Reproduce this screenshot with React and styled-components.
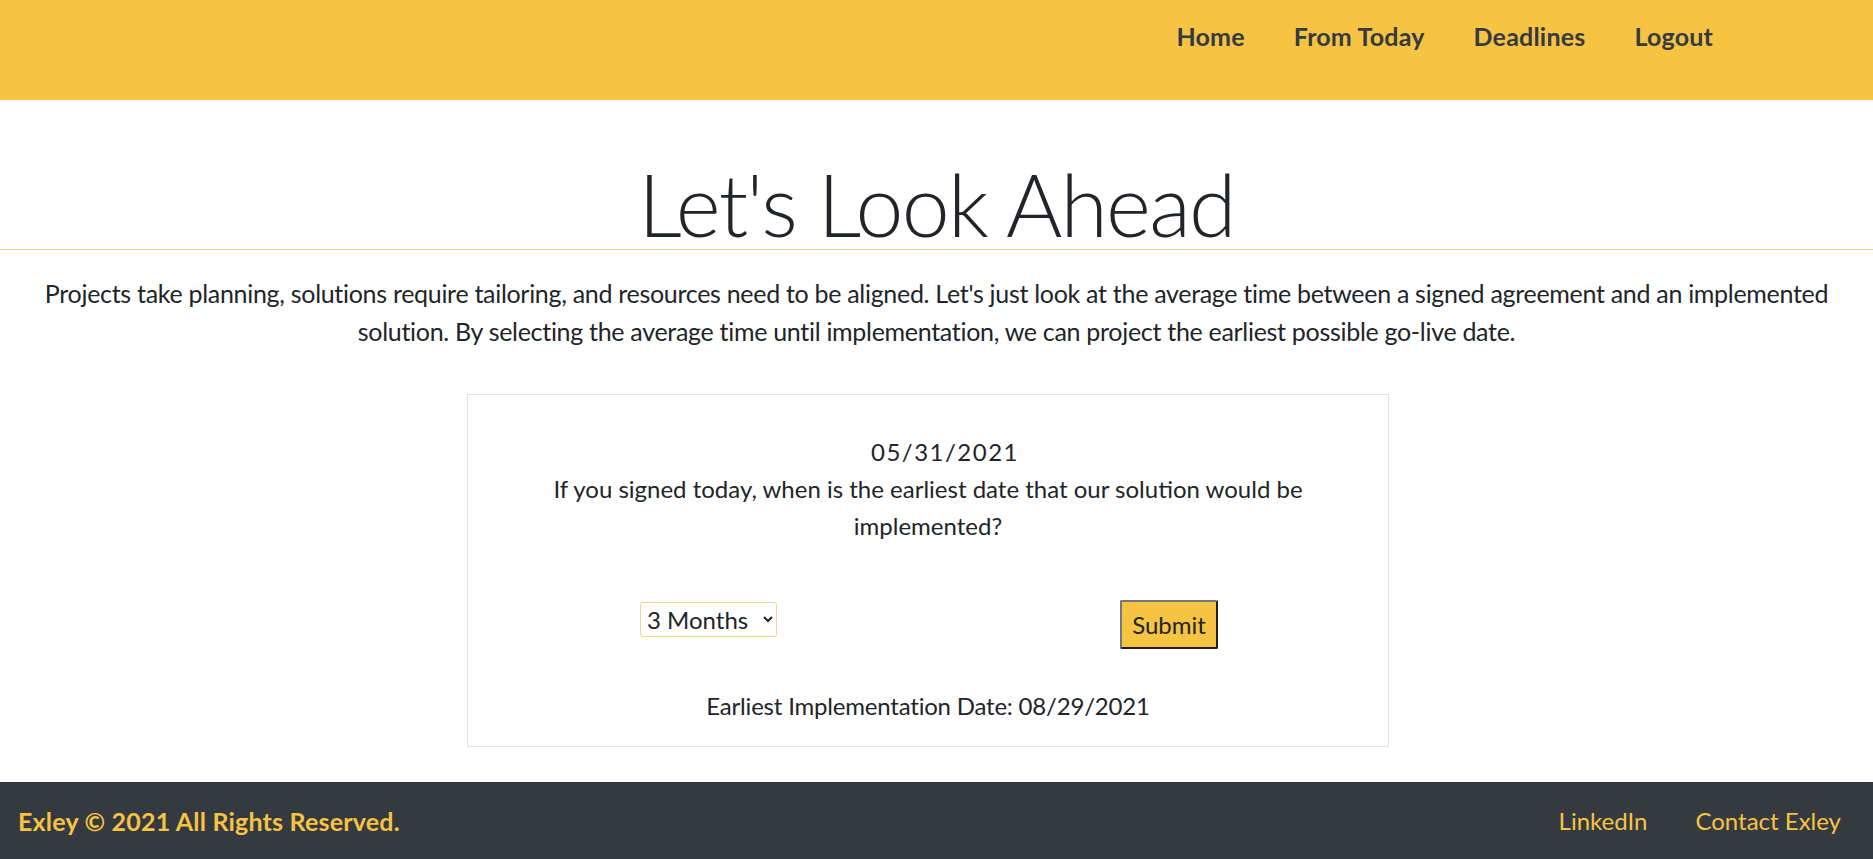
import React, { useState } from "react";
import styled, { createGlobalStyle } from "styled-components";

const GlobalStyle = createGlobalStyle`
  body {
    margin: 0;
    font-family: "Lato", "Open Sans", sans-serif;
    color: #212529;
    background: #fff;
  }
`;

const Page = styled.div`
  min-height: 100vh;
  display: flex;
  flex-direction: column;
`;

const NavBar = styled.nav`
  height: 100px;
  background: #f6c343;
  display: flex;
  justify-content: flex-end;
  align-items: flex-start;
  gap: 49px;
  padding: 22px 160px 0 0;
  box-sizing: border-box;
`;

const NavLink = styled.a`
  font-size: 25px;
  font-weight: 700;
  line-height: 28px;
  letter-spacing: 0.2px;
  color: #343a40;
  text-decoration: none;
  cursor: pointer;
`;

const Title = styled.h1`
  margin: 59px 0 0;
  font-size: 86px;
  font-weight: 300;
  line-height: 90px;
  letter-spacing: -1.7px;
  text-align: center;
  border-bottom: 1px solid #ebd293;
`;

const Lead = styled.p`
  margin: 24px 0 0;
  padding: 0 20px;
  font-size: 25px;
  line-height: 38px;
  letter-spacing: -0.3px;
  text-align: center;
`;

const CardWrap = styled.div`
  display: flex;
  justify-content: center;
  padding-right: 17px;
  margin-top: 44px;
`;

const Card = styled.section`
  width: 922px;
  box-sizing: border-box;
  border: 1px solid #e3e3e3;
  padding: 38px 40px 22px;
  text-align: center;
  font-size: 24px;
  line-height: 37px;
`;

const DateLine = styled.div`
  padding-left: 34px;
  letter-spacing: 1.5px;
`;

const Question = styled.div``;

const Controls = styled.div`
  display: flex;
  align-items: flex-start;
  gap: 343px;
  margin-top: 56px;
  padding-left: 132px;
`;

const MonthSelect = styled.select`
  margin-top: 2px;
  width: 137px;
  height: 35px;
  font-family: inherit;
  font-size: 24px;
  color: #212529;
  background: #fff;
  border: 1px solid #f1d68c;
  border-radius: 3px;
  padding: 0 2px;
`;

const SubmitButton = styled.button`
  width: 98px;
  height: 49px;
  font-family: inherit;
  font-size: 24px;
  color: #212529;
  background: #f6c343;
  border: 2px solid;
  border-color: #767676 #1f1f1f #1f1f1f #767676;
  border-radius: 2px;
  padding: 0 6px;
  cursor: pointer;
`;

const Result = styled.div`
  margin-top: 38px;
  letter-spacing: -0.2px;
`;

const Footer = styled.footer`
  margin-top: auto;
  height: 77px;
  background: #343a40;
  display: flex;
  align-items: center;
  justify-content: space-between;
  padding: 0 32px 0 18px;
  box-sizing: border-box;
  font-size: 24px;
  color: #f6c343;
`;

const Copyright = styled.span`
  font-size: 25px;
  font-weight: 700;
  letter-spacing: 0.2px;
`;

const FooterLinks = styled.div`
  display: flex;
  gap: 48px;
`;

const FooterLink = styled.a`
  color: #f6c343;
  text-decoration: none;
  cursor: pointer;
`;

const addMonths = (date, months) => {
  const d = new Date(date);
  d.setDate(d.getDate() + months * 30);
  const mm = String(d.getMonth() + 1).padStart(2, "0");
  const dd = String(d.getDate()).padStart(2, "0");
  return `${mm}/${dd}/${d.getFullYear()}`;
};

export default function App() {
  const [months, setMonths] = useState(3);
  const today = new Date(2021, 4, 31);

  return (
    <Page>
      <GlobalStyle />
      <NavBar>
        <NavLink>Home</NavLink>
        <NavLink>From Today</NavLink>
        <NavLink>Deadlines</NavLink>
        <NavLink>Logout</NavLink>
      </NavBar>

      <Title>Let's Look Ahead</Title>
      <Lead>
        Projects take planning, solutions require tailoring, and resources need
        to be aligned. Let's just look at the average time between a signed
        agreement and an implemented solution. By selecting the average time
        until implementation, we can project the earliest possible go-live date.
      </Lead>

      <CardWrap>
        <Card>
          <DateLine>05/31/2021</DateLine>
          <Question>
            If you signed today, when is the earliest date that our solution
            would be implemented?
          </Question>
          <Controls>
            <MonthSelect
              value={months}
              onChange={(e) => setMonths(Number(e.target.value))}
            >
              <option value={1}>1 Month</option>
              <option value={3}>3 Months</option>
              <option value={6}>6 Months</option>
              <option value={9}>9 Months</option>
            </MonthSelect>
            <SubmitButton>Submit</SubmitButton>
          </Controls>
          <Result>
            Earliest Implementation Date: {addMonths(today, months)}
          </Result>
        </Card>
      </CardWrap>

      <Footer>
        <Copyright>Exley © 2021 All Rights Reserved.</Copyright>
        <FooterLinks>
          <FooterLink>LinkedIn</FooterLink>
          <FooterLink>Contact Exley</FooterLink>
        </FooterLinks>
      </Footer>
    </Page>
  );
}
